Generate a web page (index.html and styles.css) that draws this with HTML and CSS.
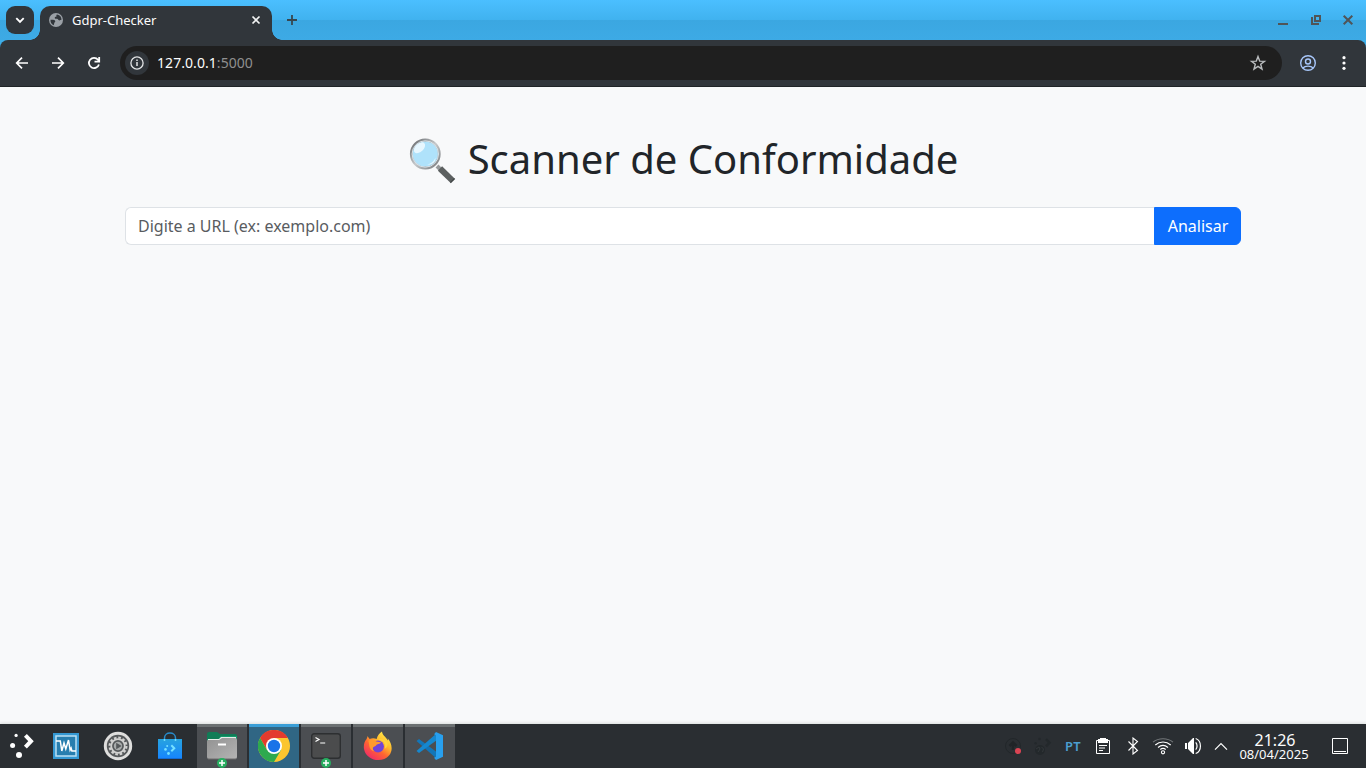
FILE: index.html
```html
<!DOCTYPE html>
<html lang="pt">
<head>
<meta charset="utf-8">
<title>Gdpr-Checker</title>
<link rel="stylesheet" href="styles.css">
</head>
<body>
<div class="screen">
  <header class="tabstrip">
    <div class="tab-search"><svg width="28" height="28" viewBox="0 0 28 28"><path d="M10.3 12.1 14 15.8l3.7-3.7" fill="none" stroke="#fff" stroke-width="1.9"/></svg></div>
    <div class="tab">
      <svg width="14" height="14" viewBox="0 0 14 14"><circle cx="7" cy="7" r="7" fill="#9aa0a6"/><path d="M8.2 1.4c-1 .2-1.2 1.2-.5 1.7-.2 1-1.8.5-2 1.6-.1 1 1 1.1 2.3 1.1 1.2 0 1 1.6 2.3 1.6.8 0 1.5-.5 2.2-.6A5.6 5.6 0 0 0 8.2 1.4M1.5 6.7c1.6-.1 4.8-.2 4.8 1.5 0 1-.9.9-1 1.9 0 .8-.7 1-.2 2.2A5.6 5.6 0 0 1 1.5 6.7" fill="#31363b"/></svg>
      <span class="tab-title">Gdpr-Checker</span>
      <svg class="tab-close" width="16" height="16" viewBox="0 0 16 16"><path d="m4.5 4.5 7 7m0-7-7 7" stroke="#f3f4f4" stroke-width="1.7"/></svg>
    </div>
    <svg class="new-tab" width="16" height="16" viewBox="0 0 16 16"><path d="M8 3v10M3 8h10" stroke="#37474f" stroke-width="1.8"/></svg>
    <div class="window-buttons">
      <svg width="16" height="16" viewBox="0 0 16 16"><path d="M3 12h10" stroke="#505457" stroke-width="2"/></svg>
      <svg width="16" height="16" viewBox="0 0 16 16"><path d="M7 4h5v5H7zM4 5v7h7" fill="none" stroke="#505457" stroke-width="2"/></svg>
      <svg width="16" height="16" viewBox="0 0 16 16"><path d="m3.7 3.7 8.6 8.6m0-8.6-8.6 8.6" stroke="#505457" stroke-width="2"/></svg>
    </div>
  </header>
  <nav class="toolbar">
    <div class="nav-buttons">
      <svg width="16" height="16" viewBox="0 0 16 16"><path d="M14 8H3M8 2.7 2.7 8 8 13.3" fill="none" stroke="#fff" stroke-width="1.7"/></svg>
      <svg width="16" height="16" viewBox="0 0 16 16"><path d="M2 8h11M8 2.7 13.3 8 8 13.3" fill="none" stroke="#fff" stroke-width="1.7"/></svg>
      <svg width="16" height="16" viewBox="0 0 16 16"><path d="M12.9 9.4A5.1 5.1 0 1 1 12 4.8l1 1.2M13.2 2v4.7H8.5" fill="none" stroke="#fff" stroke-width="1.8"/></svg>
    </div>
    <div class="address">
      <span class="site-info"><svg width="16" height="16" viewBox="0 0 16 16"><circle cx="8" cy="8" r="6.1" fill="none" stroke="#e2e4e5" stroke-width="1.3"/><path d="M8 7v4M8 4.6v1.5" stroke="#e2e4e5" stroke-width="1.5"/></svg></span>
      <span class="url">127.0.0.1<span class="port">:5000</span></span>
      <svg class="star" width="18" height="18" viewBox="0 0 18 18"><path d="m9 2.6 1.7 4.5 4.8.2-3.8 3 1.3 4.7L9 12.3 5 15l1.3-4.7-3.8-3 4.8-.2z" fill="none" stroke="#b9bcbe" stroke-width="1.4"/></svg>
    </div>
    <svg class="profile" width="18" height="18" viewBox="0 0 18 18"><g fill="none" stroke="#a8c7fa" stroke-width="1.4"><circle cx="9" cy="9" r="7.3"/><circle cx="9" cy="7.5" r="2.5"/><path d="M3.8 14c2.5-2.5 7.9-2.5 10.4 0"/></g></svg>
    <svg class="more" width="4" height="16" viewBox="0 0 4 16"><g fill="#fff"><circle cx="2" cy="2.7" r="1.6"/><circle cx="2" cy="8" r="1.6"/><circle cx="2" cy="13.3" r="1.6"/></g></svg>
  </nav>
  <main class="page">
    <h1 class="heading">
      <svg class="magnifier" width="48" height="48" viewBox="0 0 48 48">
        <defs><linearGradient id="rim" x2="1" y2="1"><stop stop-color="#626568"/><stop offset=".5" stop-color="#c7cacc"/><stop offset="1" stop-color="#74777a"/></linearGradient></defs>
        <path d="m29 29 5 5" stroke="#96999b" stroke-width="4"/>
        <path d="m32 31.5 12.5 12.2" stroke="#5c6060" stroke-width="6"/><path d="m42.4 45.8 4.3-4.2" stroke="#414545" stroke-width="1.4"/>
        <circle cx="17.3" cy="17" r="14" fill="#afe2fb" stroke="url(#rim)" stroke-width="2.8"/>
        <circle cx="17.3" cy="17" r="13.2" fill="none" stroke="#d8e2e8" stroke-width="1"/>
        <ellipse cx="11.5" cy="10.8" rx="6.7" ry="4" transform="rotate(-43 11.5 10.8)" fill="#e7f7ff"/>
        <path d="M19 27.5c4-.7 7-3 8.5-6.8.1 4.3-3.5 7.5-8.5 6.8" fill="#e6f7ff"/>
      </svg>
      <span>Scanner de Conformidade</span>
    </h1>
    <form class="search">
      <input class="search-input" type="text" placeholder="Digite a URL (ex: exemplo.com)">
      <button class="search-button" type="button">Analisar</button>
    </form>
  </main>
  <footer class="taskbar">
    <div class="launcher"><svg width="25" height="26" viewBox="0 0 25 26"><g fill="#fff"><circle cx="6.1" cy="2.4" r="1.6"/><circle cx="2.6" cy="12.6" r="2.5"/><circle cx="9" cy="22" r="3"/></g><path d="m15.4 2.3 5.6 5.9-5.6 5.9" fill="none" stroke="#fff" stroke-width="4"/></svg></div>
    <div class="pin pin-monitor"><svg width="28" height="28" viewBox="0 0 28 28"><path d="M1 1h26v26H1z" fill="#3498d3"/><path d="M4 4h20v20H4z" fill="#277eaf" stroke="#b9dff5" stroke-width="1.5"/><path d="M4 9h4.3l1.5 10 2.2-8 1.8 6 2.7-9 1.6 10 1-2 .8 3H24" fill="none" stroke="#fff" stroke-width="1.5"/></svg></div>
    <div class="pin"><svg width="30" height="30" viewBox="0 0 30 30"><circle cx="15" cy="15" r="14.2" fill="#dededd"/><circle cx="15" cy="15" r="11.2" fill="#56595b"/><circle cx="15" cy="15" r="8.4" fill="none" stroke="#d1d1d0" stroke-width="2.2" stroke-dasharray="2.6 1.8"/><circle cx="15" cy="15" r="6.8" fill="none" stroke="#d1d1d0" stroke-width="1.8"/><circle cx="15" cy="15" r="4.2" fill="#a8abab"/><path d="m13.2 11.8 5.5 3.2-5.5 3.2z" fill="#56595b"/></svg></div>
    <div class="pin"><svg width="28" height="30" viewBox="0 0 28 30"><defs><linearGradient id="bag" x2="0" y2="1"><stop stop-color="#27a3df"/><stop offset="1" stop-color="#1685ff"/></linearGradient></defs><path d="M2 8h24v20H2z" fill="url(#bag)"/><path d="M8.5 10V7c0-6.6 11-6.6 11 0v3" fill="none" stroke="#278dce" stroke-width="1.5"/><path d="M2 27.5h24" stroke="#136bd4"/><g fill="#75e1ff"><circle cx="8.5" cy="9" r="1"/><circle cx="19.5" cy="9" r="1"/><circle cx="11.2" cy="15" r="1"/><circle cx="9.5" cy="18.4" r="1.3"/><circle cx="12.5" cy="22.5" r="1.4"/></g><path d="m15.3 14.2 3 3-3 3" fill="none" stroke="#75e1ff" stroke-width="2"/></svg></div>
    <div class="tasks">
      <div class="task"><svg width="32" height="30" viewBox="0 0 32 30"><defs><linearGradient id="drawer" x2="1" y2="1"><stop stop-color="#929292"/><stop offset="1" stop-color="#b4b4b4"/></linearGradient></defs><path d="M1 3q0-2 2-2h8l3 2h15q2 0 2 2v9H1z" fill="#107d57"/><path d="M1 8h11l3-3h16v4H1z" fill="#129b6a"/><path d="M2 8h11l2-2h15v4H2z" fill="#e6eee9"/><path d="M1 10q0-1 1-1h11l3-2h13q2 0 2 2v17q0 2-2 2H3q-2 0-2-2z" fill="url(#drawer)"/><path d="M12 13.5h8" stroke="#fff" stroke-width="2"/><path d="M2 28h28" stroke="#6c6c6c"/></svg><svg class="badge" width="10" height="10" viewBox="0 0 10 10"><circle cx="5" cy="5" r="5" fill="#27ae60"/><path d="M5 2v6M2 5h6" stroke="#fff" stroke-width="1.5"/></svg></div>
      <div class="task task-active"><svg width="32" height="32" viewBox="0 0 32 32"><circle cx="16" cy="16" r="16" fill="#fbc52f"/><path d="M2.1 8A16 16 0 0 1 29.9 8H16l-6.9 12z" fill="#e33b2e"/><path d="M2.1 8A16 16 0 0 0 16 32l7-12H9z" fill="#2da94f"/><circle cx="16" cy="16" r="8" fill="#fff"/><circle cx="16" cy="16" r="6.2" fill="#1a73e8"/></svg></div>
      <div class="task"><svg width="30" height="28" viewBox="0 0 30 28"><rect x=".7" y="1.7" width="28.6" height="24.6" rx="2.5" fill="#4b4c4d" stroke="#2d2f31" stroke-width="1.4"/><path d="m4.5 5.5 3.5 2-3.5 2M9.2 11h5" fill="none" stroke="#fff" stroke-width="1.2"/></svg><svg class="badge" width="10" height="10" viewBox="0 0 10 10"><circle cx="5" cy="5" r="5" fill="#27ae60"/><path d="M5 2v6M2 5h6" stroke="#fff" stroke-width="1.5"/></svg></div>
      <div class="task"><svg class="firefox" width="30" height="30" viewBox="0 0 30 30"><defs><linearGradient id="flame" x1=".85" y1=".05" x2=".2" y2=".95"><stop stop-color="#fff04b"/><stop offset=".35" stop-color="#ffb92c"/><stop offset=".62" stop-color="#ff6531"/><stop offset="1" stop-color="#f02a68"/></linearGradient></defs><path d="M4.5 5c.6 1.2 1.3 2 2.2 3 2-.9 4.8-.9 7 0C14.3 5 16.2 2 19 .5c.3 3.7 3.7 5 5.8 9 .3-.6.1-1.6-.2-2.3C29 12 30.3 19.500 26 24.500 19.900 32 3.600 30.500 1 18 .4 13.500 1.500 10.500 3.300 8.500 3.800 7.500 4.500 6.300 4.500 5" fill="url(#flame)"/><circle cx="15" cy="15.500" r="5.900" fill="#7043d7"/><path d="M5.500 9.700c3.200-2 6-.6 7.900.8l4.600.7c-1 2-4.200 1.700-4.700 2.900-.3 1.500-2 1.200-3.300 2.400-.4 1.700.3 3 1.500 4.100-3-.5-4.800-2.700-5.200-5.500z" fill="#ff9a2b"/><path d="M15.500 8.700c5.200.2 7.700 4.700 6.200 9 2-1 3.200-3 2.900-5.200-1-3.200-5-5-9.100-3.800" fill="#ffd23c"/></svg></div>
      <div class="task"><svg width="28" height="28" viewBox="0 0 28 28"><path d="M.5 9 3 7l18 13.3V27z" fill="#1276b9"/><path d="M.5 19 21 1v7L3 21z" fill="#1688cf"/><path d="m20 0 7 3.300v21.400L20 28l-2-2.200 2-1V3.300l-2-1z" fill="#28a0ef"/></svg></div>
    </div>
    <div class="tray">
      <span class="tray-item w29"><svg width="22" height="22" viewBox="0 0 22 22"><circle cx="11" cy="11" r="7.500" fill="none" stroke="#22272a"/><path d="M11 15V8M7.500 11 11 7.500l3.500 3.500" fill="none" stroke="#202427" stroke-width="2.500"/><circle cx="16" cy="16" r="3" fill="#da4453"/></svg></span>
      <span class="tray-item w29"><svg width="22" height="22" viewBox="0 0 22 22"><g fill="#23282b"><circle cx="8.500" cy="4" r="1.300"/><circle cx="4.600" cy="8.200" r="1.200"/><circle cx="9" cy="15" r="5"/></g><path d="m15 4.200 3.500 3.600-3.500 3.600" fill="none" stroke="#23282b" stroke-width="2.500"/><path d="m5 14 3-2 1 2-2 3M10.500 12l2 2-1 3" stroke="#33383b" fill="none"/></svg></span>
      <span class="tray-item w32 language">PT</span>
      <span class="tray-item w30"><svg width="16" height="18" viewBox="0 0 16 18"><path d="M1.500 3.500h13v13h-13z" fill="none" stroke="#fff"/><path d="M3 2h2V1h6v1h2v4H3z" fill="#fff"/><path d="M4 8.500h8M4 11h6M4 13.500h4" stroke="#fff"/></svg></span>
      <span class="tray-item w30"><svg width="12" height="18" viewBox="0 0 12 18"><path d="m1.500 4.500 9 9L6 17V1l4.500 3.500-9 9" fill="none" stroke="#fff" stroke-width="1.100"/></svg></span>
      <span class="tray-item w30"><svg width="22" height="18" viewBox="0 0 22 18"><g fill="none" stroke="#fff" stroke-width="1.100"><path d="M1 5.200c5.500-4.600 14.500-4.600 20 0" stroke="#73777a"/><path d="M3.300 8c4.500-4 10.900-4 15.400 0M6 10.500c3-2.600 7-2.600 10 0M8.300 12.500c1.500-1.200 3.900-1.200 5.400 0"/><circle cx="11" cy="15.300" r="1.600"/></g></svg></span>
      <span class="tray-item w30"><svg width="18" height="18" viewBox="0 0 18 18"><path d="M1 6h2v6H1zM4 6l5-5h1v16H9l-5-5z" fill="#fff"/><path d="M11.700 5.300c1.800 1.800 1.800 5.600 0 7.400M11.700 1.500c6.300 2.200 6.300 12.800 0 15" fill="none" stroke="#fff" stroke-width="1.200"/></svg></span>
      <span class="tray-item w26"><svg width="14" height="9" viewBox="0 0 14 9"><path d="m1 7.700 6-6 6 6" fill="none" stroke="#fff" stroke-width="1.200"/></svg></span>
      <div class="clock"><span class="time">21:26</span><span class="date">08/04/2025</span></div>
      <span class="tray-item w52"><svg width="16" height="16" viewBox="0 0 16 16"><path d="M.5.5h15v15H.5zM2 13.500h12" fill="none" stroke="#fff"/></svg></span>
    </div>
  </footer>
</div>
</body>
</html>
```
FILE: styles.css
```css
* { box-sizing: border-box; }
body { margin: 0; font-family: "Noto Sans", sans-serif; }
svg { display: block; flex: none; }
.screen { width: 1366px; height: 768px; display: flex; flex-direction: column; overflow: hidden; background: #3daee9; }
.tabstrip { height: 40px; flex: none; display: flex; align-items: flex-start; background: linear-gradient(#4bbfff 0, #40b2ef 20px, #3ba7e1 20px, #3daae5 40px); }
.tab-search { width: 28px; height: 28px; margin: 6px 6px 0; border-radius: 9px; background: #31363b; }
.tab { position: relative; width: 232px; height: 34px; margin-top: 6px; padding: 0 8px 6px 9px; display: flex; align-items: center; border-radius: 10px 10px 0 0; background: #31363b; color: #fcfcfc; }
.tab::before, .tab::after { content: ""; position: absolute; bottom: 0; width: 10px; height: 10px; }
.tab::before { left: -10px; background: radial-gradient(circle at 0 0, transparent 9.5px, #31363b 10px); }
.tab::after { right: -10px; background: radial-gradient(circle at 100% 0, transparent 9.5px, #31363b 10px); }
.tab-title { margin-left: 9px; font-size: 13px; }
.tab-close { margin-left: auto; }
.new-tab { margin: 12px 0 0 12px; }
.window-buttons { display: flex; gap: 17px; margin: 12px 10px 0 auto; }
.window-buttons svg:nth-child(2) { margin-right: -1px; }
.toolbar { height: 47px; flex: none; display: flex; align-items: center; padding: 0 20px 1px 14px; border-bottom: 1px solid #202427; border-radius: 8px 8px 0 0; background: #31363b; }
.nav-buttons { display: flex; gap: 20px; width: 106px; }
.address { width: 1162px; height: 34px; display: flex; align-items: center; padding: 0 15px 0 5px; border-radius: 17px; background: #1f1f1f; }
.site-info { width: 24px; height: 24px; display: flex; align-items: center; justify-content: center; border-radius: 50%; background: #31363b; }
.url { margin-left: 8px; color: #fcfcfc; font-size: 14px; letter-spacing: 0.06px; }
.port { color: #8f8f8f; }
.star { margin-left: auto; }
.profile { margin-left: 17px; }
.more { margin-left: auto; }
.page { flex: 1; padding: 48px 125px 0; background: #f8f9fa; color: #212529; }
.heading { display: flex; align-items: center; justify-content: center; gap: 12px; margin: 0 0 24px; height: 48px; font-size: 40px; font-weight: 400; line-height: 48px; white-space: nowrap; }
.magnifier { margin-top: 3px; }
.search { display: flex; margin: 0; height: 38px; }
.search-input { flex: 1; min-width: 0; padding: 6px 12px; border: 1px solid #dee2e6; border-right: 0; border-radius: 6px 0 0 6px; background: #fff; color: #212529; font: 16px/24px "Noto Sans", sans-serif; }
.search-input::placeholder { color: #595c5f; opacity: 1; }
.search-button { width: 87px; padding: 6px 0 6px 1px; border: 1px solid #0d6efd; border-radius: 0 6px 6px 0; background: #0d6efd; color: #fff; font: 16px/24px "Noto Sans", sans-serif; }
.taskbar { height: 44px; flex: none; display: flex; background: #2a2e32; color: #fcfcfc; box-shadow: 0 -1px 3px #d9dddc; }
.launcher { width: 40px; padding: 9px 0 0 10px; }
.pin { width: 52px; display: flex; align-items: center; justify-content: center; }
.tasks { display: flex; gap: 2px; margin-left: 1px; }
.task { position: relative; width: 50px; display: flex; align-items: center; justify-content: center; background: #4b4e52; border-top: 3px solid #6b7072; }
.task > svg:first-child { margin-bottom: 3px; }
.task-active { background: #306684; border-top-color: #3a9ed6; }
.badge { position: absolute; left: 19.5px; bottom: 0.5px; }
.tray { display: flex; align-items: center; margin-left: auto; }
.tray-item { display: flex; align-items: center; justify-content: center; flex: none; }
.w26 { width: 26px; }
.w29 { width: 29px; }
.w30 { width: 30px; }
.w32 { width: 32px; }
.w52 { width: 52px; }
.language { padding-left: 2px; color: #4b9fd0; font-size: 13px; font-weight: 600; letter-spacing: 0.3px; }
.clock { width: 80px; display: flex; flex-direction: column; align-items: center; }
.time { padding-left: 2px; font-size: 16px; line-height: 16px; }
.date { font-size: 13px; line-height: 13px; }
```
